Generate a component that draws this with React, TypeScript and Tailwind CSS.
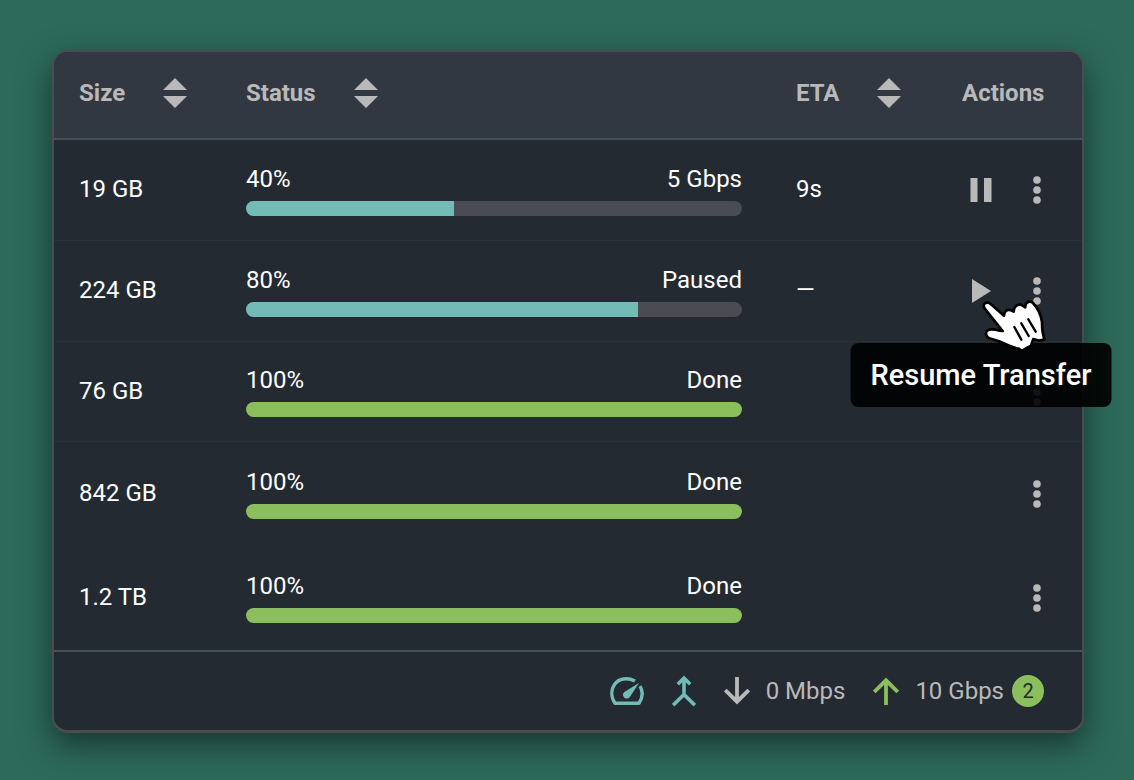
import React from "react";
import clsx from "clsx";

type Transfer = {
  size: string;
  progress: string;
  filled: number;
  state: string;
  eta?: string;
  action?: "pause" | "resume";
};

const transfers: Transfer[] = [
  { size: "19 GB", progress: "40%", filled: 42, state: "5 Gbps", eta: "9s", action: "pause" },
  { size: "224 GB", progress: "80%", filled: 79, state: "Paused", eta: "—", action: "resume" },
  { size: "76 GB", progress: "100%", filled: 100, state: "Done" },
  { size: "842 GB", progress: "100%", filled: 100, state: "Done" },
  { size: "1.2 TB", progress: "100%", filled: 100, state: "Done" },
];

// the first three rows are separated by a faint line, the rest only by space
const rowStyles = [
  "h-[101px] *:border-b *:border-[#25343a]",
  "h-[101px] *:border-b *:border-[#25343a]",
  "h-[100px] *:border-b *:border-[#25343a]",
  "h-[103px]",
  "h-[105px]",
];

const SortIcon = () => (
  <svg viewBox="0 0 24 30" className="h-[30px] w-6" fill="currentColor">
    <path d="M12 0 24 12H0zM0 18h24L12 30z" />
  </svg>
);

const MoreIcon = () => (
  <svg viewBox="0 0 8 28" className="h-7 w-2" fill="currentColor">
    <circle cx="4" cy="4" r="3.8" />
    <circle cx="4" cy="14" r="3.8" />
    <circle cx="4" cy="24" r="3.8" />
  </svg>
);

const PauseIcon = () => (
  <svg viewBox="0 0 22 24" className="h-6 w-[22px]" fill="currentColor">
    <path d="M0.5 0h7v24h-7zM14 0h7.5v24H14z" />
  </svg>
);

const PlayIcon = () => (
  <svg viewBox="0 0 22 24" className="h-6 w-[22px]" fill="currentColor">
    <path d="M2 0 21 12 2 24z" />
  </svg>
);

const HandCursor = () => (
  <svg viewBox="420 115 204 165" className="h-[55px] w-[68px]">
    <path
      d="M433 130C438 124 447 125 453 131L492 165C492 151 501 146 511 148L521 153C521 138 532 130 543 132L556 140C554 126 568 118 579 127C594 143 603 161 606 184C606 201 607 221 614 236L598 240L580 235L573 255L545 271L537 264C517 262 490 247 475 241L448 233C439 229 435 218 441 211C448 203 464 206 479 210L488 211L436 146C431 140 430 134 433 130Z"
      fill="#fff"
      stroke="#000"
      strokeWidth="8"
      strokeLinejoin="round"
    />
    <path d="M523 199 544 237M544 188 566 226M565 176 587 213" stroke="#000" strokeWidth="7" strokeLinecap="round" />
  </svg>
);

const GaugeIcon = () => (
  <svg viewBox="0 0 34 28" className="h-7 w-[34px] text-[#72bcb5]" fill="none" stroke="currentColor" strokeWidth="3.4">
    <path d="M25 4C17 0 9 1.600 5 6.800C0.800 12.500 0.800 20 5 26.200H29C32.800 20.500 33.200 14.500 30 9.200" strokeLinejoin="round" />
    <path d="M29 6 20 19.800A3.800 3.800 0 1 1 14.300 14.900Z" fill="currentColor" stroke="none" />
  </svg>
);

const MergeIcon = () => (
  <svg viewBox="0 0 24 32" className="h-8 w-6 text-[#72bcb5]" fill="none" stroke="currentColor" strokeWidth="3.6">
    <path d="M12 3V19.500M5.800 9.200 12 3 18.200 9.200M1.200 30.200 12 19.500 22.800 30.200" />
  </svg>
);

const DownIcon = () => (
  <svg viewBox="0 0 26 28" className="h-7 w-[26px]" fill="none" stroke="currentColor" strokeWidth="3.8">
    <path d="M13 0V25M1.300 13 13 24.700 24.700 13" />
  </svg>
);

const UpIcon = () => (
  <svg viewBox="0 0 26 28" className="h-7 w-[26px] text-[#8bbe5c]" fill="none" stroke="currentColor" strokeWidth="3.8">
    <path d="M13 28V3M1.300 15 13 3.300 24.700 15" />
  </svg>
);

const SortButton = ({ label }: { label: string }) => (
  <button className="flex h-[30px] items-center gap-[38px] font-bold">
    <span>{label}</span>
    <SortIcon />
  </button>
);

const App = () => {
  return (
    <main className="min-h-screen overflow-x-hidden bg-[#2d6a5a] py-[50px] pr-[50px] pl-[52px] font-['Roboto',sans-serif] text-2xl">
      <section className="rounded-2xl border-2 border-b-[3px] border-[#4a4b53] bg-[#242a32] shadow-[0_12px_32px_rgba(0,0,0,0.5)]">
        <table className="w-full table-fixed border-separate border-spacing-0 text-white">
          <colgroup>
            <col className="w-48" />
            <col />
            <col className="w-[150px]" />
            <col className="w-[136px]" />
          </colgroup>
          <thead>
            <tr className="h-[88px] text-left text-[#b9b9b9] *:border-b-2 *:border-[#42525a] *:bg-[#313841] *:pb-1">
              <th className="rounded-tl-[14px] pl-[25px]">
                <SortButton label="Size" />
              </th>
              <th>
                <SortButton label="Status" />
              </th>
              <th>
                <SortButton label="ETA" />
              </th>
              <th className="rounded-tr-[14px] pl-4">Actions</th>
            </tr>
          </thead>
          <tbody>
            {transfers.map(({ size, progress, filled, state, eta, action }, index) => (
              <tr key={size} className={rowStyles[index]}>
                <td className="pb-0.5 pl-[25px]">{size}</td>
                <td className="pr-[54px]">
                  <div className="flex justify-between leading-7">
                    <span>{progress}</span>
                    <span>{state}</span>
                  </div>
                  <div className="mt-2 h-[15px] overflow-hidden rounded-full bg-[#4a4b53]">
                    <div
                      className={clsx("h-full", filled === 100 ? "bg-[#8bbe5c]" : "bg-[#72bcb5]")}
                      style={{ width: `${filled}%` }}
                    />
                  </div>
                </td>
                <td className="pb-0.5">{eta}</td>
                <td className="pr-[41px]">
                  <div className="flex items-center justify-end gap-[41px] text-[#b9b9b9]">
                    {action && (
                      <button className="relative" aria-label={action === "pause" ? "Pause Transfer" : "Resume Transfer"}>
                        {action === "pause" ? <PauseIcon /> : <PlayIcon />}
                        {action === "resume" && (
                          <>
                            <span className="absolute top-full left-1/2 z-10 mt-10 -translate-x-1/2 rounded-lg bg-black/90 px-5 py-3 text-[29px] leading-10 font-medium whitespace-nowrap text-white">
                              Resume Transfer
                            </span>
                            <span className="absolute top-5 left-2.5 z-20">
                              <HandCursor />
                            </span>
                          </>
                        )}
                      </button>
                    )}
                    <button aria-label="More">
                      <MoreIcon />
                    </button>
                  </div>
                </td>
              </tr>
            ))}
          </tbody>
        </table>
        <footer className="flex h-20 items-center justify-end border-t-2 border-[#42525a] pr-[38px] text-[#b9b9b9]">
          <div className="flex items-center gap-7">
            <GaugeIcon />
            <MergeIcon />
            <div className="flex items-center gap-4">
              <DownIcon />
              <span>0 Mbps</span>
            </div>
            <div className="flex items-center gap-4">
              <UpIcon />
              <span>10 Gbps</span>
            </div>
          </div>
          <span className="ml-2 grid size-8 place-content-center rounded-full bg-[#8bbe5c] text-xl leading-none text-[#242a32]">
            2
          </span>
        </footer>
      </section>
    </main>
  );
};

export default App;
